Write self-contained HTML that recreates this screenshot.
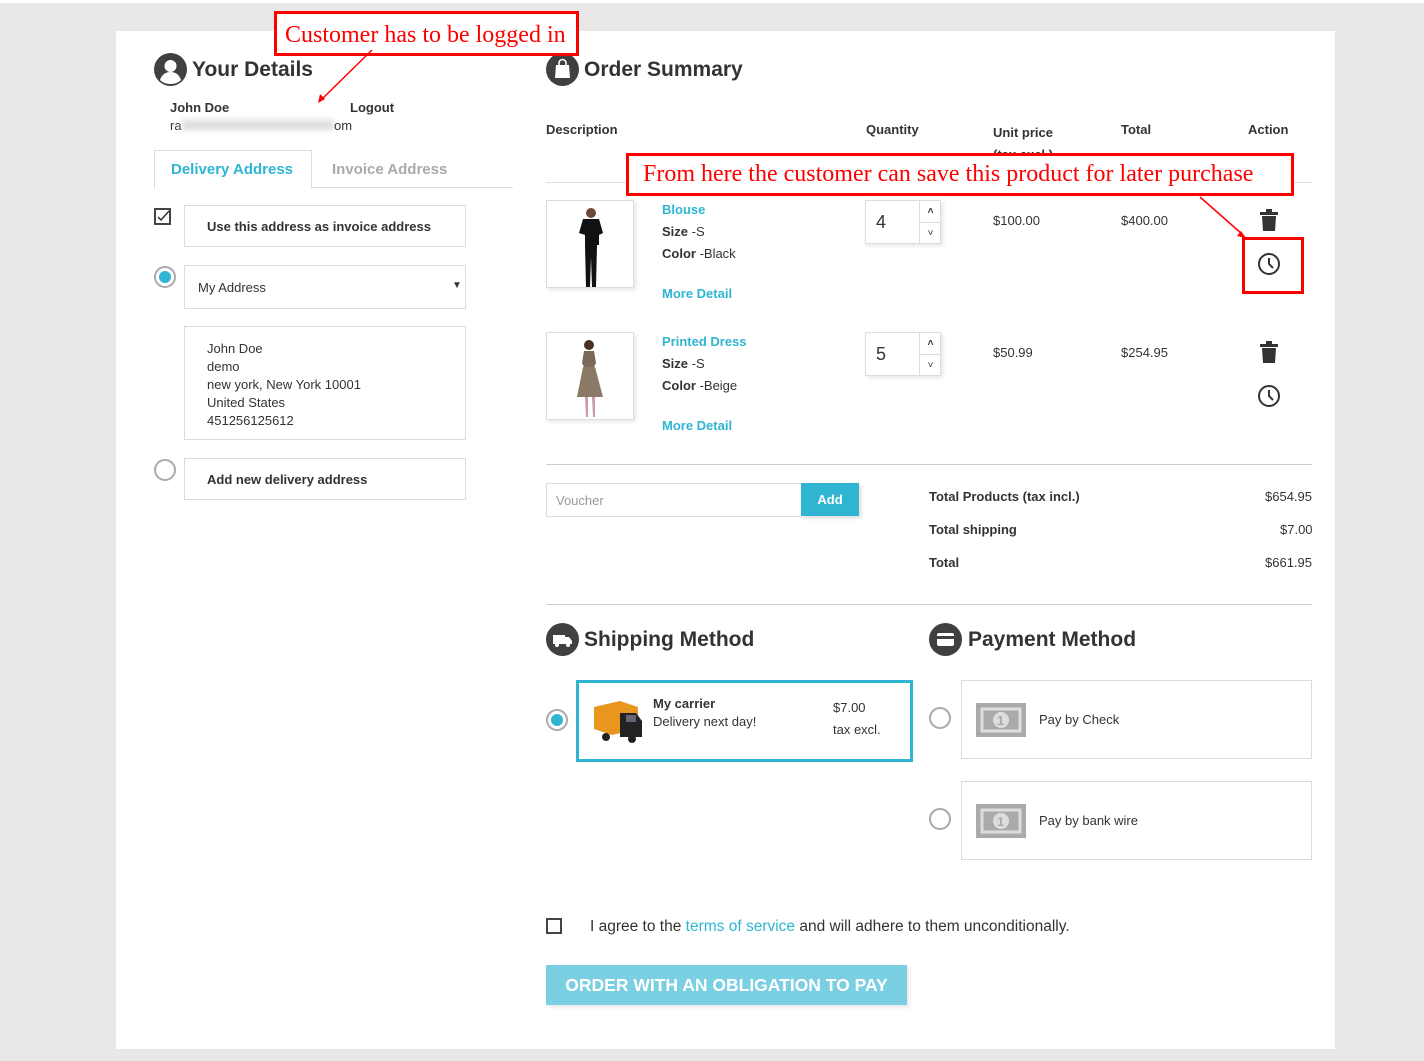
<!DOCTYPE html>
<html><head><meta charset="utf-8">
<style>
*{box-sizing:border-box;margin:0;padding:0}
body{width:1424px;height:1061px;background:#e8e8e8;font-family:"Liberation Sans",sans-serif;color:#333;font-size:13px;position:relative;overflow:hidden}
.a{position:absolute}
.top{left:0;top:0;width:1424px;height:3px;background:#fff}
.card{left:116px;top:31px;width:1219px;height:1018px;background:#fff}
.h{font-size:21px;font-weight:bold;color:#333}
.b{font-weight:bold}
.blue{color:#2fb5d2}
.box{border:1px solid #dcdcdc;background:#fff}
.ic{width:33px;height:33px;border-radius:50%;background:#404040}
.radio{width:22px;height:22px;border-radius:50%;border:2px solid #aaa;background:#fff}
.radio.on::after{content:"";position:absolute;left:3px;top:3px;width:12px;height:12px;border-radius:50%;background:#2fb5d2}
.red{border:3px solid #f00;color:#f00;font-family:"Liberation Serif",serif;font-size:24px;background:#fff}
.th{font-weight:bold;font-size:13px}
.img{width:88px;height:88px;border:1px solid #ddd;box-shadow:2px 2px 4px rgba(0,0,0,.1);background:#fff}
.qty{width:76px;height:44px;border:1px solid #ddd;box-shadow:2px 2px 4px rgba(0,0,0,.1);background:#fff}
.qty span{position:absolute;left:10px;top:11px;font-size:18px}
.qty i{position:absolute;left:53px;top:0;width:22px;height:42px;border-left:1px solid #ddd;font-style:normal;font-size:10px;text-align:center;line-height:21px}
.qty i b{display:block;border-bottom:1px solid #ddd;font-weight:bold}
</style></head><body>
<div class="a top"></div>
<div class="a card"></div>

<div class="a ic" style="left:154px;top:53px"><svg width="33" height="33" viewBox="0 0 33 33"><circle cx="16.5" cy="13" r="6" fill="#fff"/><path d="M6 27c2-6 6-8 10.5-8s8.5 2 10.5 8c-3 3-6.5 4-10.5 4S9 30 6 27z" fill="#fff"/></svg></div>
<div class="a h" style="left:192px;top:58px">Your Details</div>
<div class="a b" style="left:170px;top:100px">John Doe</div>
<div class="a b" style="left:350px;top:100px">Logout</div>
<div class="a" style="left:170px;top:118px">ra</div>
<div class="a" style="left:182px;top:120px;width:152px;height:10px;background:#ddd;filter:blur(3px)"></div>
<div class="a" style="left:334px;top:118px">om</div>

<div class="a" style="left:154px;top:187px;width:359px;height:1px;background:#ddd"></div>
<div class="a" style="left:154px;top:150px;width:158px;height:39px;border:1px solid #ddd;border-bottom:none;background:#fff"></div>
<div class="a b blue" style="left:171px;top:161px;font-size:15px">Delivery Address</div>
<div class="a b" style="left:332px;top:161px;font-size:15px;color:#aaa">Invoice Address</div>

<div class="a" style="left:154px;top:208px;width:17px;height:17px;border:2px solid #444"><svg class="a" style="left:1px;top:0" width="13" height="13"><path d="M1 7l3 3 8-9" stroke="#333" stroke-width="1.5" fill="none"/></svg></div>
<div class="a box" style="left:184px;top:205px;width:282px;height:42px"></div>
<div class="a b" style="left:207px;top:219px">Use this address as invoice address</div>

<div class="a radio on" style="left:154px;top:266px"></div>
<div class="a box" style="left:184px;top:265px;width:282px;height:44px"></div>
<div class="a" style="left:198px;top:280px">My Address</div>
<div class="a" style="left:452px;top:280px;font-size:10px">▼</div>

<div class="a box" style="left:184px;top:326px;width:282px;height:114px"></div>
<div class="a" style="left:207px;top:340px;line-height:18px">John Doe<br>demo<br>new york, New York 10001<br>United States<br>451256125612</div>

<div class="a radio" style="left:154px;top:459px"></div>
<div class="a box" style="left:184px;top:458px;width:282px;height:42px"></div>
<div class="a b" style="left:207px;top:472px">Add new delivery address</div>

<div class="a ic" style="left:546px;top:53px"><svg width="33" height="33"><path d="M10 12h13l1 13H9z" fill="#fff"/><path d="M13 13v-3a3.5 3.5 0 017 0v3" stroke="#fff" stroke-width="1.6" fill="none"/></svg></div>
<div class="a h" style="left:584px;top:58px">Order Summary</div>
<div class="a th" style="left:546px;top:122px">Description</div>
<div class="a th" style="left:866px;top:122px">Quantity</div>
<div class="a th" style="left:993px;top:122px;line-height:22px">Unit price<br>(tax excl.)</div>
<div class="a th" style="left:1121px;top:122px">Total</div>
<div class="a th" style="left:1248px;top:122px">Action</div>
<div class="a" style="left:546px;top:182px;width:766px;height:1px;background:#ddd"></div>

<div class="a img" style="left:546px;top:200px"><svg width="86" height="86"><circle cx="44" cy="12" r="5" fill="#6b4a35"/><path d="M36 18h16l4 14-4 2v10h-14V34l-6-2z" fill="#111"/><path d="M38 44h12l-1 42h-4l-1-30-1 30h-4z" fill="#111"/></svg></div>
<div class="a b blue" style="left:662px;top:202px">Blouse</div>
<div class="a" style="left:662px;top:224px"><b>Size</b> -S</div>
<div class="a" style="left:662px;top:246px"><b>Color</b> -Black</div>
<div class="a b blue" style="left:662px;top:286px">More Detail</div>
<div class="a qty" style="left:865px;top:200px"><span>4</span><i><b>˄</b>˅</i></div>
<div class="a" style="left:993px;top:213px">$100.00</div>
<div class="a" style="left:1121px;top:213px">$400.00</div>

<div class="a img" style="left:546px;top:332px"><svg width="86" height="86"><circle cx="42" cy="12" r="5" fill="#4a3020"/><path d="M37 18h10l2 12-2 4h-10l-2-4z" fill="#7a6a55"/><path d="M36 34h12l8 30H30z" fill="#8a7a65"/><path d="M38 64h3v20h-2zM45 64h3v20h-2z" fill="#c9a"/></svg></div>
<div class="a b blue" style="left:662px;top:334px">Printed Dress</div>
<div class="a" style="left:662px;top:356px"><b>Size</b> -S</div>
<div class="a" style="left:662px;top:378px"><b>Color</b> -Beige</div>
<div class="a b blue" style="left:662px;top:418px">More Detail</div>
<div class="a qty" style="left:865px;top:332px"><span>5</span><i><b>˄</b>˅</i></div>
<div class="a" style="left:993px;top:345px">$50.99</div>
<div class="a" style="left:1121px;top:345px">$254.95</div>

<svg class="a" style="left:1260px;top:209px" width="18" height="22"><rect x="0" y="3" width="18" height="3" fill="#333"/><rect x="6" y="0" width="6" height="3" fill="#333"/><path d="M2 7h14l-1 15H3z" fill="#333"/></svg>
<svg class="a" style="left:1257px;top:252px" width="24" height="24"><circle cx="12" cy="12" r="10" stroke="#333" stroke-width="2" fill="none"/><path d="M12 6v6l4 4" stroke="#333" stroke-width="2" fill="none"/></svg>
<svg class="a" style="left:1260px;top:341px" width="18" height="22"><rect x="0" y="3" width="18" height="3" fill="#333"/><rect x="6" y="0" width="6" height="3" fill="#333"/><path d="M2 7h14l-1 15H3z" fill="#333"/></svg>
<svg class="a" style="left:1257px;top:384px" width="24" height="24"><circle cx="12" cy="12" r="10" stroke="#333" stroke-width="2" fill="none"/><path d="M12 6v6l4 4" stroke="#333" stroke-width="2" fill="none"/></svg>

<div class="a" style="left:546px;top:464px;width:766px;height:1px;background:#ccc"></div>
<div class="a box" style="left:546px;top:483px;width:256px;height:34px"></div>
<div class="a" style="left:556px;top:493px;color:#999">Voucher</div>
<div class="a b" style="left:801px;top:483px;width:58px;height:33px;background:#2fb5d2;color:#fff;text-align:center;line-height:33px;box-shadow:2px 2px 4px rgba(0,0,0,.15)">Add</div>
<div class="a b" style="left:929px;top:489px">Total Products (tax incl.)</div>
<div class="a" style="left:1265px;top:489px">$654.95</div>
<div class="a b" style="left:929px;top:522px">Total shipping</div>
<div class="a" style="left:1280px;top:522px">$7.00</div>
<div class="a b" style="left:929px;top:555px">Total</div>
<div class="a" style="left:1265px;top:555px">$661.95</div>
<div class="a" style="left:546px;top:604px;width:766px;height:1px;background:#ccc"></div>

<div class="a ic" style="left:546px;top:623px"><svg width="33" height="33"><rect x="7" y="12" width="12" height="9" fill="#fff"/><path d="M19 14h4l3 4v3h-7z" fill="#fff"/><circle cx="11" cy="22" r="2" fill="#fff"/><circle cx="22" cy="22" r="2" fill="#fff"/></svg></div>
<div class="a h" style="left:584px;top:628px">Shipping Method</div>
<div class="a radio on" style="left:546px;top:709px"></div>
<div class="a" style="left:576px;top:680px;width:337px;height:82px;border:3px solid #2fb5d2"></div>
<svg class="a" style="left:592px;top:697px" width="54" height="48"><path d="M2 10l26-6 18 6v22l-26 6-18-6z" fill="#e8961e"/><path d="M28 16h16l6 8v16H28z" fill="#222"/><rect x="34" y="18" width="10" height="7" fill="#667"/><circle cx="14" cy="40" r="4" fill="#222"/><circle cx="40" cy="42" r="4" fill="#222"/></svg>
<div class="a b" style="left:653px;top:696px">My carrier</div>
<div class="a" style="left:653px;top:714px">Delivery next day!</div>
<div class="a" style="left:833px;top:700px">$7.00</div>
<div class="a" style="left:833px;top:722px">tax excl.</div>

<div class="a ic" style="left:929px;top:623px"><svg width="33" height="33"><rect x="8" y="10" width="17" height="13" rx="2" fill="#fff"/><rect x="8" y="13" width="17" height="3" fill="#404040"/></svg></div>
<div class="a h" style="left:968px;top:628px">Payment Method</div>
<div class="a radio" style="left:929px;top:707px"></div>
<div class="a box" style="left:961px;top:680px;width:351px;height:79px"></div>
<svg class="a" style="left:976px;top:703px" width="50" height="34"><rect width="50" height="34" fill="#aaa"/><path d="M6 6h38v22H6z" fill="none" stroke="#ddd" stroke-width="3"/><circle cx="25" cy="17" r="8" fill="#ddd"/><text x="21" y="22" font-size="13" font-weight="bold" fill="#aaa" font-family="Liberation Sans">1</text></svg>
<div class="a" style="left:1039px;top:712px">Pay by Check</div>
<div class="a radio" style="left:929px;top:808px"></div>
<div class="a box" style="left:961px;top:781px;width:351px;height:79px"></div>
<svg class="a" style="left:976px;top:804px" width="50" height="34"><rect width="50" height="34" fill="#aaa"/><path d="M6 6h38v22H6z" fill="none" stroke="#ddd" stroke-width="3"/><circle cx="25" cy="17" r="8" fill="#ddd"/><text x="21" y="22" font-size="13" font-weight="bold" fill="#aaa" font-family="Liberation Sans">1</text></svg>
<div class="a" style="left:1039px;top:813px">Pay by bank wire</div>

<div class="a" style="left:546px;top:918px;width:16px;height:16px;border:2px solid #444"></div>
<div class="a" style="left:590px;top:918px;font-size:15.5px">I agree to the <span class="blue">terms of service</span> and will adhere to them unconditionally.</div>
<div class="a b" style="left:546px;top:965px;width:361px;height:40px;background:#7acfe2;color:#fff;font-size:17.5px;text-align:center;line-height:40px;box-shadow:2px 2px 4px rgba(0,0,0,.1)">ORDER WITH AN OBLIGATION TO PAY</div>

<div class="a red" style="left:274px;top:11px;width:305px;height:45px;padding:8px 0 0 8px;white-space:nowrap">Customer has to be logged in</div>
<div class="a red" style="left:626px;top:153px;width:668px;height:43px;padding:5px 0 0 14px;white-space:nowrap">From here the customer can save this product for later purchase</div>
<svg class="a" style="left:0;top:0" width="1424" height="1061" pointer-events="none">
<path d="M372 50L322 99" stroke="#f00" stroke-width="1.5"/><path d="M318 103l2-9 5 5z" fill="#f00"/>
<path d="M1200 197L1242 234" stroke="#f00" stroke-width="1.5"/><path d="M1246 238l-9-2 4-5z" fill="#f00"/>
<rect x="1243.5" y="238.5" width="59" height="54" fill="none" stroke="#f00" stroke-width="3"/>
</svg>
</body></html>
